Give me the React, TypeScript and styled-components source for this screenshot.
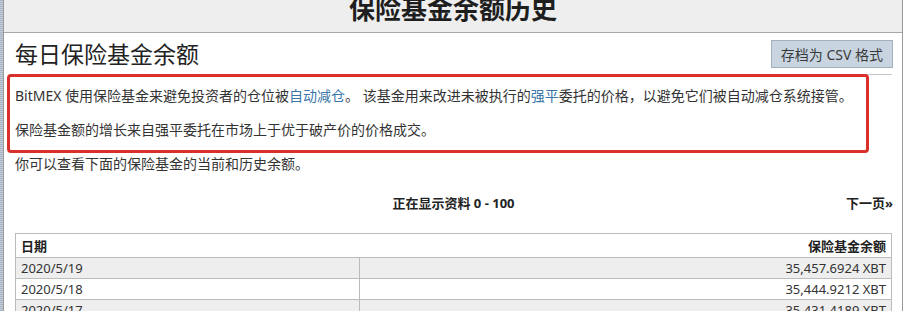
import React from "react";
import styled, { createGlobalStyle } from "styled-components";

const GlobalStyle = createGlobalStyle`
  html, body { margin: 0; padding: 0; background: #ffffff; }
  body {
    font-family: "Noto Sans", "Noto Sans CJK SC", sans-serif;
    color: #333333;
    overflow: hidden;
  }
  * { box-sizing: border-box; }
`;

const Frame = styled.div`
  display: flex;
  min-height: 311px;
  width: 905px;
`;

const Strip = styled.div`
  width: 3px;
  flex: none;
  background: repeating-linear-gradient(
    180deg,
    #a9b5c4 0px,
    #a9b5c4 1px,
    #c3ccd7 1px,
    #c3ccd7 2px
  );
`;

const Main = styled.div`
  flex: 1;
  margin-right: 2px;
  border-left: 1px solid #9a9a9a;
  border-right: 1px solid #9a9a9a;
  background: #ffffff;
`;

const Header = styled.header`
  height: 33px;
  overflow: hidden;
  background: #eeeeee;
  border-bottom: 1px solid #a8a8a8;
  text-align: center;
`;

const Title = styled.h1`
  margin: -6px 0 0;
  font-size: 26px;
  line-height: 30px;
  font-weight: 700;
  color: #1e1e1e;
`;

const Content = styled.main`
  padding: 0 10px 0 11px;
`;

const SectionRow = styled.div`
  display: flex;
  justify-content: space-between;
  align-items: center;
  height: 42px;
  border-bottom: 1px solid #c8c8c8;
`;

const Heading = styled.h2`
  margin: 0;
  font-size: 23px;
  line-height: 30px;
  font-weight: 400;
  color: #222222;
`;

const CsvButton = styled.button`
  height: 28px;
  margin: 0 -1px 0 0;
  padding: 0 9px;
  font-family: inherit;
  font-size: 14px;
  color: #3a3a3a;
  background: #c8d5e1;
  border: 1px solid #a5b0bb;
  border-radius: 0;
`;

const Highlight = styled.section`
  margin: -1px 23px 0 -8px;
  padding: 9px 0 10px 5px;
  border: 3px solid #d9302b;
  border-radius: 4px;
`;

const Para = styled.p`
  margin: 0;
  font-size: 14px;
  line-height: 20px;
  color: #333333;
  & + & {
    margin-top: 14px;
  }
`;

const Link = styled.a`
  color: #3a76a8;
  text-decoration: none;
`;

const Intro = styled.p`
  margin: 1px 0 0;
  font-size: 14px;
  line-height: 20px;
  color: #333333;
`;

const Pager = styled.div`
  display: grid;
  grid-template-columns: 1fr auto 1fr;
  margin-top: 19px;
  font-size: 13px;
  line-height: 20px;
  font-weight: 700;
  color: #222222;
`;

const PagerInfo = styled.span`
  grid-column: 2;
`;

const PagerNext = styled.a`
  grid-column: 3;
  justify-self: end;
  margin-right: -1px;
  color: #222222;
  text-decoration: none;
`;

const Table = styled.table`
  width: 100%;
  margin-top: 20px;
  border-collapse: collapse;
  border: 1px solid #bcbcbc;
  font-size: 13px;
  color: #333333;
`;

const Th = styled.th<{ $right?: boolean }>`
  height: 24px;
  padding: 0 5px;
  text-align: ${(p) => (p.$right ? "right" : "left")};
  font-weight: 700;
  color: #222222;
  border-bottom: 1px solid #bcbcbc;
`;

const Tr = styled.tr<{ $shaded?: boolean }>`
  background: ${(p) => (p.$shaded ? "#eeeeee" : "#ffffff")};
`;

const Td = styled.td<{ $right?: boolean; $first?: boolean }>`
  height: 21px;
  padding: 0 5px;
  line-height: 20px;
  text-align: ${(p) => (p.$right ? "right" : "left")};
  width: ${(p) => (p.$first ? "344px" : "auto")};
  border-bottom: 1px solid #bcbcbc;
  border-right: ${(p) => (p.$first ? "1px solid #bcbcbc" : "none")};
`;

const rows = [
  { date: "2020/5/19", amount: "35,457.6924 XBT" },
  { date: "2020/5/18", amount: "35,444.9212 XBT" },
  { date: "2020/5/17", amount: "35,431.4189 XBT" },
];

export default function App() {
  return (
    <>
      <GlobalStyle />
      <Frame>
        <Strip />
        <Main>
          <Header>
            <Title>保险基金余额历史</Title>
          </Header>
          <Content>
            <SectionRow>
              <Heading>每日保险基金余额</Heading>
              <CsvButton>存档为 CSV 格式</CsvButton>
            </SectionRow>
            <Highlight>
              <Para>
                BitMEX 使用保险基金来避免投资者的仓位被<Link href="#">自动减仓</Link>。 该基金用来改进未被执行的
                <Link href="#">强平</Link>委托的价格，以避免它们被自动减仓系统接管。
              </Para>
              <Para>保险基金额的增长来自强平委托在市场上于优于破产价的价格成交。</Para>
            </Highlight>
            <Intro>你可以查看下面的保险基金的当前和历史余额。</Intro>
            <Pager>
              <PagerInfo>正在显示资料 0 - 100</PagerInfo>
              <PagerNext href="#">下一页»</PagerNext>
            </Pager>
            <Table>
              <thead>
                <tr>
                  <Th>日期</Th>
                  <Th $right>保险基金余额</Th>
                </tr>
              </thead>
              <tbody>
                {rows.map((r, i) => (
                  <Tr key={r.date} $shaded={i % 2 === 0}>
                    <Td $first>{r.date}</Td>
                    <Td $right>{r.amount}</Td>
                  </Tr>
                ))}
              </tbody>
            </Table>
          </Content>
        </Main>
      </Frame>
    </>
  );
}
